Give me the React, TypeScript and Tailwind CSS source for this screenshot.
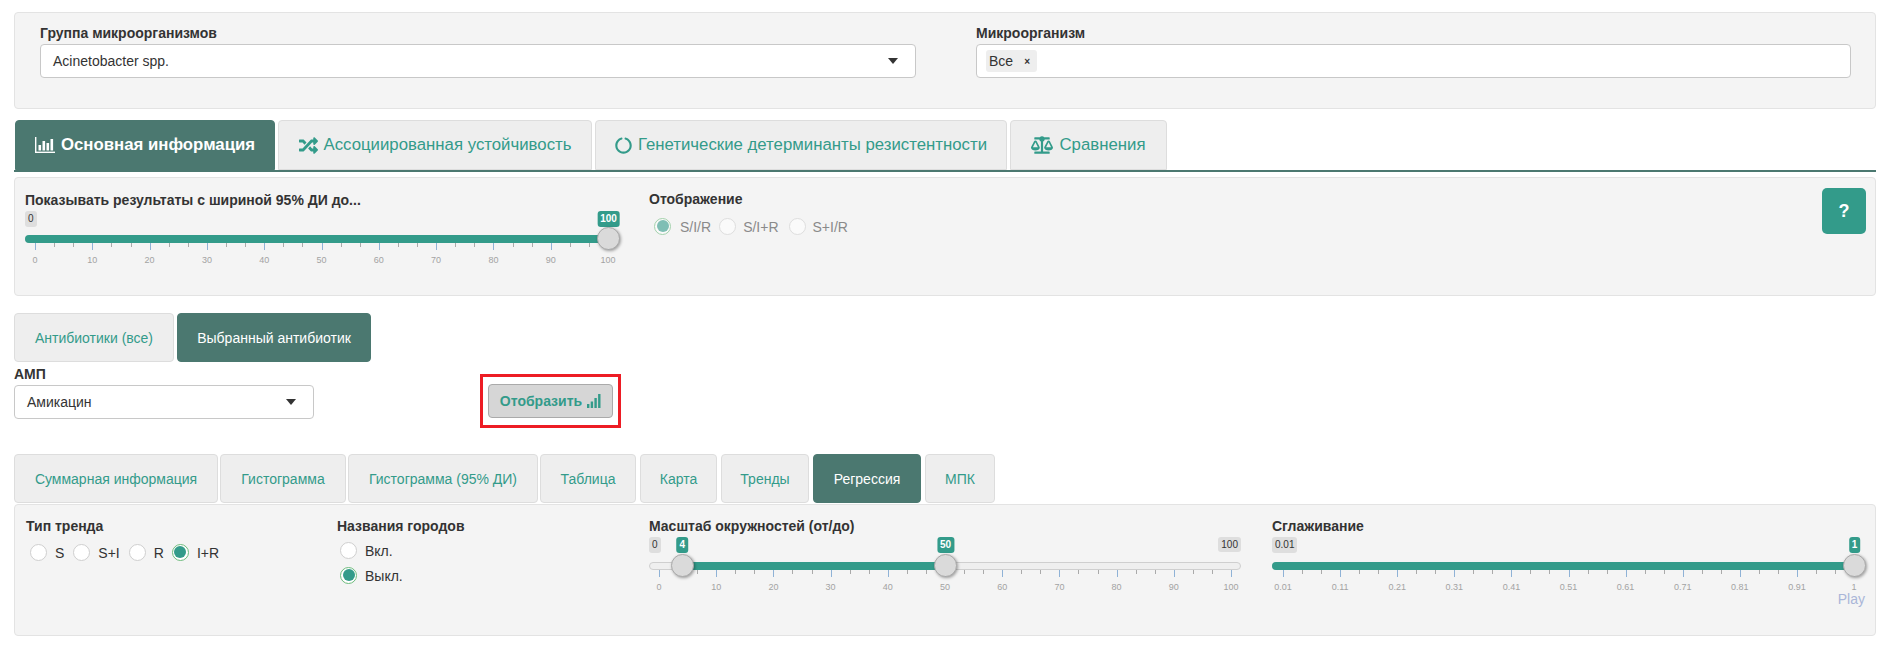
import React from "react";
import { FaRandom, FaCircleNotch, FaBalanceScale } from "react-icons/fa";

function ChartIcon() {
  return (
    <svg width="20" height="16" viewBox="0 0 20 16" fill="currentColor" className="shrink-0">
      <rect x="0" y="0" width="1.4" height="16" />
      <rect x="0" y="14.6" width="20" height="1.4" />
      <rect x="3.5" y="8" width="2.6" height="5.5" />
      <rect x="7.5" y="4" width="2.6" height="9.5" />
      <rect x="11.5" y="6" width="2.6" height="7.5" />
      <rect x="15.5" y="2" width="2.6" height="11.5" />
    </svg>
  );
}

function SignalIcon() {
  return (
    <svg width="14" height="14" viewBox="0 0 14 14" fill="currentColor" className="shrink-0">
      <rect x="0" y="10" width="2.4" height="4" />
      <rect x="3.7" y="7.5" width="2.4" height="6.5" />
      <rect x="7.4" y="4" width="2.4" height="10" />
      <rect x="11.1" y="0" width="2.4" height="14" />
    </svg>
  );
}

function Radio({ checked, dim }: { checked?: boolean; dim?: boolean }) {
  return (
    <span
      className={
        "flex h-[17px] w-[17px] shrink-0 items-center justify-center rounded-full border " +
        (checked ? "border-[#6dbb7c] bg-white" : "border-[#cfcfcf] bg-white") +
        (dim ? " opacity-60" : "")
      }
    >
      {checked && <span className="h-[12px] w-[12px] rounded-full bg-[#339b8a]" />}
    </span>
  );
}

function Arrow() {
  return <span className="h-0 w-0 border-x-[5px] border-t-[6px] border-x-transparent border-t-[#333]" />;
}

function Select({ value, cls }: { value: string; cls: string }) {
  return (
    <div className={"flex h-[34px] items-center justify-between rounded-[4px] border border-[#c8c8c8] bg-white pl-[12px] pr-[17px] text-[14px] text-[#333] " + cls}>
      <span className="pt-px">{value}</span>
      <Arrow />
    </div>
  );
}

function Chip({ text, x, accent, bold }: { text: string; x: number; accent?: boolean; bold?: boolean }) {
  return (
    <span
      className={
        "absolute top-0 h-[16px] rounded-[3px] px-[3px] text-[10px] leading-[15px] whitespace-nowrap " +
        (accent ? "bg-[#339b8a] text-white" : "bg-[#dedede] text-[#333]") +
        (bold ? " font-bold" : "")
      }
      style={{ left: x, transform: accent ? "translateX(-50%)" : undefined }}
    >
      {text}
    </span>
  );
}

function Thumb({ x, top }: { x: number; top: number }) {
  return (
    <span
      className="absolute h-[23px] w-[23px] rounded-full border border-[#aaa] bg-[#dadada] shadow-[1px_1px_3px_rgba(0,0,0,0.35)]"
      style={{ left: x - 11.5, top: top - 8 }}
    />
  );
}

function Slider({
  width,
  start,
  end,
  labels,
  from,
  to,
  minLabel,
  maxLabel,
  top = 24,
}: {
  width: number;
  start: number;
  end: number;
  labels: string[];
  from?: { v: number; l: string };
  to: { v: number; l: string };
  minLabel: string;
  maxLabel?: string;
  top?: number;
}) {
  const span = end - start;
  const xOf = (p: number) => start + (span * p) / 100;
  const minors: number[] = [];
  for (let i = 0; i < 10; i++) {
    minors.push(i * 10 + 10 / 3, i * 10 + 20 / 3);
  }
  const fillL = from ? xOf(from.v) : 0;
  const fillR = xOf(to.v);
  return (
    <div className="relative h-[62px]" style={{ width }}>
      <Chip text={minLabel} x={0} />
      {maxLabel && <span className="absolute right-0 top-0 h-[15px] rounded-[3px] bg-[#dedede] px-[3px] text-[10px] leading-[15px] text-[#333]">{maxLabel}</span>}
      <div className="absolute left-0 right-0 h-[8px] rounded-[4px] border border-[#cfcfcf] bg-[#efefef]" style={{ top }} />
      <div className="absolute h-[8px] rounded-l-[4px] bg-[#339b8a]" style={{ left: fillL, width: fillR - fillL, top }} />
      {Array.from({ length: 11 }).map((_, i) => (
        <React.Fragment key={i}>
          <span className="absolute h-[7px] w-px bg-[#8fb2d6]" style={{ left: xOf(i * 10), top: top + 8 }} />
          <span className="absolute w-[30px] text-center text-[9px] leading-[14px] text-[#a3a3a3]" style={{ left: xOf(i * 10) - 15, top: top + 18 }}>
            {labels[i]}
          </span>
        </React.Fragment>
      ))}
      {minors.map((m) => (
        <span key={m} className="absolute h-[4px] w-px bg-[#aaa]" style={{ left: xOf(m), top: top + 8 }} />
      ))}
      {from && <Chip text={from.l} x={xOf(from.v) + 0.5} accent bold />}
      <Chip text={to.l} x={xOf(to.v) + 0.5} accent bold />
      {from && <Thumb x={xOf(from.v) + 0.5} top={top} />}
      <Thumb x={xOf(to.v) + 0.5} top={top} />
    </div>
  );
}

const pct = ["0", "10", "20", "30", "40", "50", "60", "70", "80", "90", "100"];
const smooth = ["0.01", "0.11", "0.21", "0.31", "0.41", "0.51", "0.61", "0.71", "0.81", "0.91", "1"];

function MainTab({ active, width, icon, text }: { active?: boolean; width: number; icon: React.ReactNode; text: string }) {
  return (
    <div
      className={
        "flex h-[50px] shrink-0 items-center justify-center gap-[6px] rounded-t-[4px] border text-[16.8px] " +
        (active ? "border-[#4b7870] bg-[#4b7870] font-bold text-white" : "border-[#ddd] bg-[#eeeeee] text-[#339b8a]")
      }
      style={{ width }}
    >
      {icon}
      <span>{text}</span>
    </div>
  );
}

function SubTab({ active, width, text, cls }: { active?: boolean; width: number; text: string; cls?: string }) {
  return (
    <div
      className={
        "flex h-[49px] shrink-0 items-center justify-center rounded-[4px] border pt-[2px] text-[14px] " +
        (active ? "border-[#4b7870] bg-[#4b7870] text-white" : "border-[#ddd] bg-[#eeeeee] text-[#339b8a]") +
        " " +
        (cls ?? "")
      }
      style={{ width }}
    >
      {text}
    </div>
  );
}

const wellCls = "rounded-[4px] border border-[#e3e3e3] bg-[#f4f4f4]";

export default function App() {
  return (
    <div className="min-h-[649px] bg-white pl-[14px] pr-[11px] pt-[12px] font-['Liberation_Sans',Arial,sans-serif] text-[14px] text-[#333]">
      {/* Top filters */}
      <div className={wellCls + " flex h-[97px] pl-[25px] pt-[10px]"}>
        <div className="w-[876px]">
          <div className="mb-px h-[20px] text-[14px] font-bold leading-[20px]">Группа микроорганизмов</div>
          <Select value="Acinetobacter spp." cls="w-full" />
        </div>
        <div className="ml-[60px] w-[875px]">
          <div className="mb-px h-[20px] text-[14px] font-bold leading-[20px]">Микроорганизм</div>
          <div className="flex h-[34px] items-center rounded-[4px] border border-[#c8c8c8] bg-white pl-[9px]">
            <span className="flex h-[22px] items-center gap-[11px] rounded-[3px] bg-[#eeeeee] pl-[3px] pr-[7px] pt-px text-[14px]">
              Все <span className="text-[10px] font-bold leading-none">×</span>
            </span>
          </div>
        </div>
      </div>

      {/* Main tabs */}
      <div className="mt-[11px] flex h-[52px] gap-[3px] border-b-2 border-[#4b7870] pl-px">
        <MainTab active width={260} icon={<ChartIcon />} text="Основная информация" />
        <MainTab width={314} icon={<FaRandom size={19} />} text="Ассоциированная устойчивость" />
        <MainTab width={412} icon={<FaCircleNotch size={17} />} text="Генетические детерминанты резистентности" />
        <MainTab width={157} icon={<FaBalanceScale size={22} />} text="Сравнения" />
      </div>

      {/* Main panel */}
      <div className={wellCls + " mt-[5px] flex h-[119px] pl-[10px] pt-[10px]"}>
        <div className="mt-[2px] w-[595px]">
          <div className="mb-px h-[20px] font-bold leading-[20px]">Показывать результаты с шириной 95% ДИ до...</div>
          <Slider width={595} start={10} end={583} labels={pct} to={{ v: 100, l: "100" }} minLabel="0" />
        </div>
        <div className="ml-[29px] mt-px w-[300px]">
          <div className="h-[20px] font-bold leading-[20px]">Отображение</div>
          <div className="mt-[5px] flex items-center text-[14px] text-[#8a8a8a]">
            <span className="ml-[5px] flex items-center gap-[9px]"><Radio checked dim /><span className="pt-[3px]">S/I/R</span></span>
            <span className="ml-[8px] flex items-center gap-[7px]"><Radio dim /><span className="pt-[3px]">S/I+R</span></span>
            <span className="ml-[10px] flex items-center gap-[7px]"><Radio dim /><span className="pt-[3px]">S+I/R</span></span>
          </div>
        </div>
        <div className="ml-auto mr-[9px] flex h-[46px] w-[44px] items-center justify-center rounded-[5px] bg-[#339b8a] text-[18px] font-bold text-white">?</div>
      </div>

      {/* Antibiotic tabs */}
      <div className="mt-[17px] flex gap-[3px]">
        <SubTab width={160} text="Антибиотики (все)" />
        <SubTab active width={194} text="Выбранный антибиотик" />
      </div>

      <div className="flex h-[66px]">
        <div className="w-[300px]">
          <div className="mb-px mt-[2px] h-[20px] font-bold leading-[20px]">АМП</div>
          <Select value="Амикацин" cls="w-full" />
        </div>
        <div className="ml-[166px] mt-[12px] flex h-[54px] w-[141px] items-center justify-center border-[3px] border-[#ed1c24]">
          <div className="flex h-[34px] w-[125px] items-center justify-center gap-[5px] rounded-[4px] border border-[#aaa] bg-[#d6d6d6] text-[14px] font-bold text-[#339b8a]">
            Отобразить <SignalIcon />
          </div>
        </div>
      </div>

      {/* Bottom tabs */}
      <div className="mt-[26px] flex">
        <SubTab width={204} text="Суммарная информация" cls="mr-[2px]" />
        <SubTab width={126} text="Гистограмма" cls="mr-[2px]" />
        <SubTab width={190} text="Гистограмма (95% ДИ)" cls="mr-[2px]" />
        <SubTab width={96} text="Таблица" cls="mr-[4px]" />
        <SubTab width={77} text="Карта" cls="mr-[4px]" />
        <SubTab width={88} text="Тренды" cls="mr-[4px]" />
        <SubTab active width={108} text="Регрессия" cls="mr-[4px]" />
        <SubTab width={70} text="МПК" />
      </div>

      {/* Bottom panel */}
      <div className={wellCls + " mt-px flex h-[132px] pl-[11px] pt-[11px]"}>
        <div className="w-[311px]">
          <div className="h-[20px] font-bold leading-[20px]">Тип тренда</div>
          <div className="mt-[4px] flex items-center text-[14px]">
            <span className="flex items-center gap-[8px] pl-[4px]"><Radio /><span className="pt-[3px]">S</span></span>
            <span className="ml-[9px] flex items-center gap-[8px]"><Radio /><span className="pt-[3px]">S+I</span></span>
            <span className="ml-[9px] flex items-center gap-[8px]"><Radio /><span className="pt-[3px]">R</span></span>
            <span className="ml-[8px] flex items-center gap-[8px]"><Radio checked /><span className="pt-[3px]">I+R</span></span>
          </div>
        </div>
        <div className="w-[312px]">
          <div className="h-[20px] font-bold leading-[20px]">Названия городов</div>
          <div className="mt-[2px] flex items-center gap-[8px] pl-[3px]"><Radio /><span className="pt-[3px]">Вкл.</span></div>
          <div className="mt-px flex items-center gap-[8px] pl-[3px]"><Radio checked /><span className="pt-[3px]">Выкл.</span></div>
        </div>
        <div className="w-[623px]">
          <div className="mb-px h-[20px] font-bold leading-[20px]">Масштаб окружностей (от/до)</div>
          <Slider width={592} start={10} end={582} labels={pct} from={{ v: 4, l: "4" }} to={{ v: 50, l: "50" }} minLabel="0" maxLabel="100" top={25} />
        </div>
        <div className="w-[593px]">
          <div className="mb-px h-[20px] font-bold leading-[20px]">Сглаживание</div>
          <Slider width={593} start={11} end={582} labels={smooth} to={{ v: 100, l: "1" }} minLabel="0.01" top={25} />
          <div className="-mt-[8px] text-right text-[14px] leading-[16px] text-[#aab6d8]">Play</div>
        </div>
      </div>
    </div>
  );
}
